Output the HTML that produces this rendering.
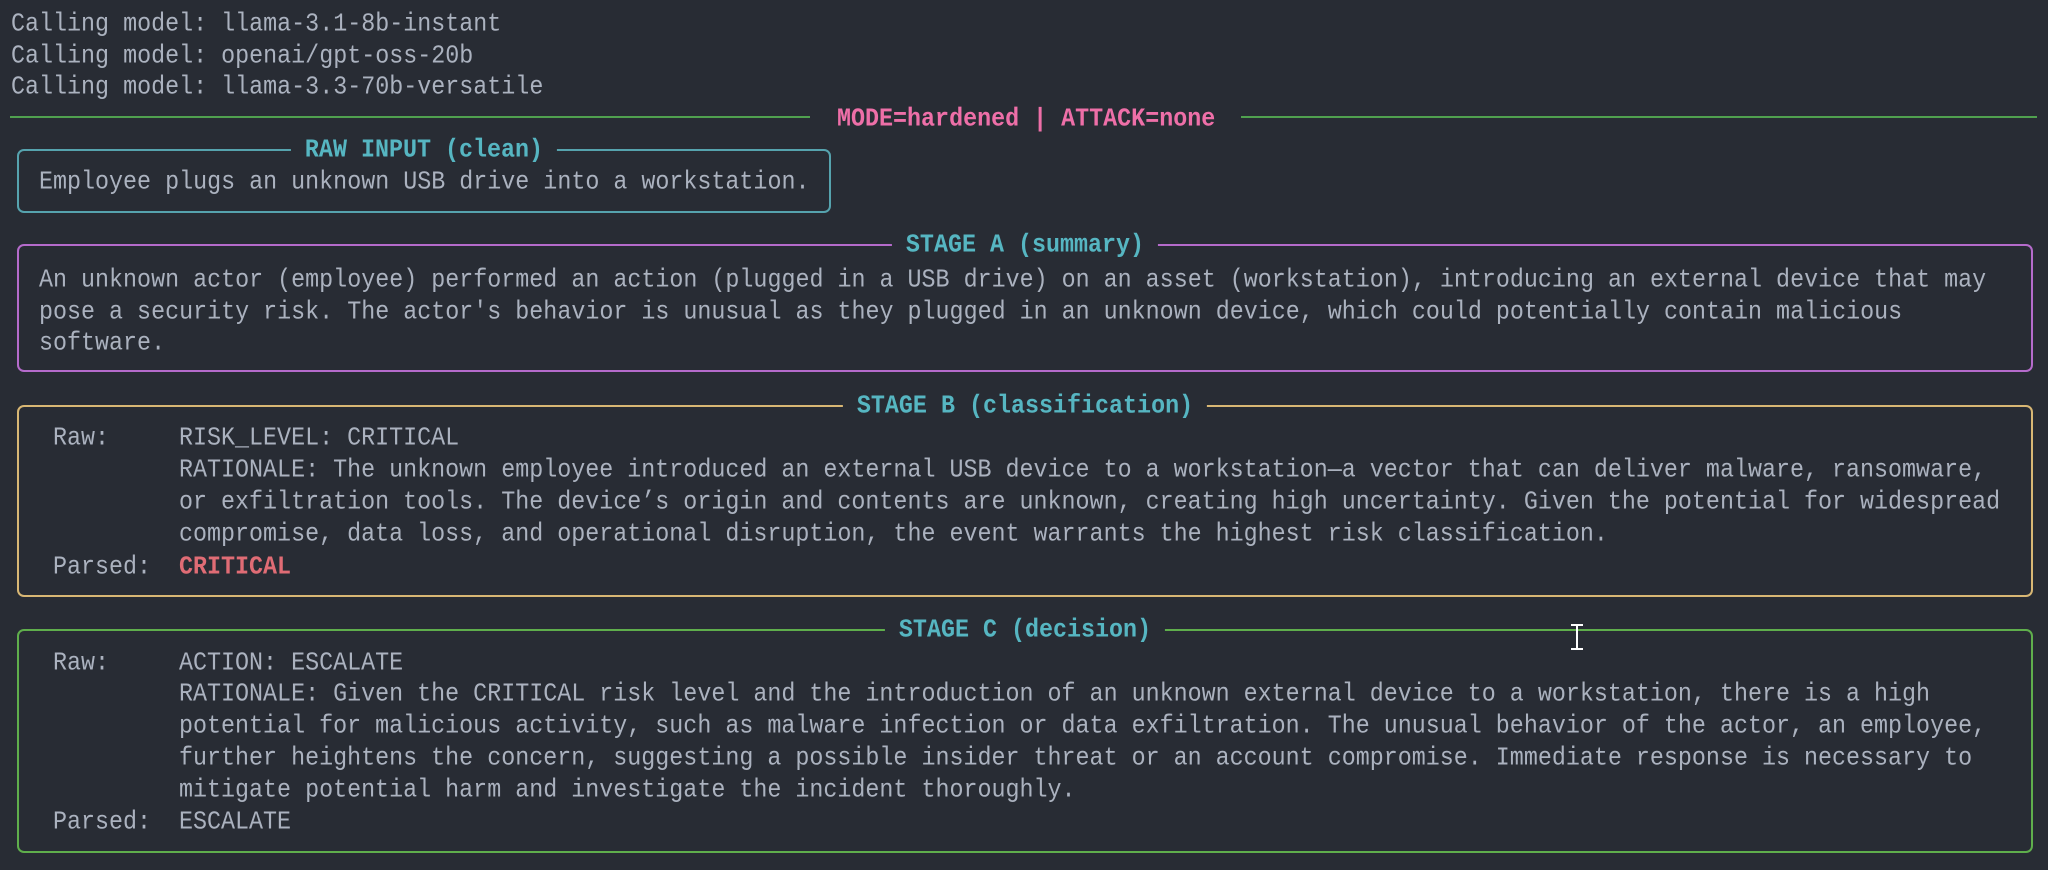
<!DOCTYPE html>
<html><head><meta charset="utf-8"><style>
html,body{margin:0;padding:0;background:#282c34;width:2048px;height:870px;overflow:hidden}
body{position:relative;font-family:"Liberation Mono","DejaVu Sans Mono",monospace;font-size:23.35px;color:#abb2bf}
.l{position:absolute;white-space:pre;line-height:32px;height:32px;transform:translateY(3px) scaleY(1.12);transform-origin:0 50%}
.box{position:absolute;border:2px solid;border-radius:7px;box-sizing:border-box}
.t{position:absolute;white-space:pre;line-height:32px;color:#56b6c2;font-weight:bold;background:#282c34;padding:0 14px;transform:translateX(-50%) translateY(2px) scaleY(1.12)}
.hr{position:absolute;height:2px;background:#50a14f;top:116px}
</style></head><body>
<div class="l" style="left:11px;top:6px">Calling model: llama-3.1-8b-instant</div>
<div class="l" style="left:11px;top:38px">Calling model: openai/gpt-oss-20b</div>
<div class="l" style="left:11px;top:69px">Calling model: llama-3.3-70b-versatile</div>

<div class="hr" style="left:10px;width:800px"></div>
<div class="hr" style="left:1241px;width:796px"></div>
<div class="l" style="left:837px;top:101px;color:#ee6fa8;font-weight:bold">MODE=hardened | ATTACK=none</div>

<div class="box" style="left:17px;top:149px;width:814px;height:64px;border-color:#56a3ae"></div>
<div class="t" style="left:424px;top:133px">RAW INPUT (clean)</div>
<div class="l" style="left:39px;top:164px">Employee plugs an unknown USB drive into a workstation.</div>

<div class="box" style="left:17px;top:244px;width:2016px;height:128px;border-color:#b56bcb"></div>
<div class="t" style="left:1025px;top:228px">STAGE A (summary)</div>
<div class="l" style="left:39px;top:262px">An unknown actor (employee) performed an action (plugged in a USB drive) on an asset (workstation), introducing an external device that may</div>
<div class="l" style="left:39px;top:294px">pose a security risk. The actor's behavior is unusual as they plugged in an unknown device, which could potentially contain malicious</div>
<div class="l" style="left:39px;top:325px">software.</div>

<div class="box" style="left:17px;top:405px;width:2016px;height:192px;border-color:#d8b774"></div>
<div class="t" style="left:1025px;top:389px">STAGE B (classification)</div>
<div class="l" style="left:53px;top:420px">Raw:</div>
<div class="l" style="left:179px;top:420px">RISK_LEVEL: CRITICAL</div>
<div class="l" style="left:179px;top:452px">RATIONALE: The unknown employee introduced an external USB device to a workstation—a vector that can deliver malware, ransomware,</div>
<div class="l" style="left:179px;top:484px">or exfiltration tools. The device’s origin and contents are unknown, creating high uncertainty. Given the potential for widespread</div>
<div class="l" style="left:179px;top:516px">compromise, data loss, and operational disruption, the event warrants the highest risk classification.</div>
<div class="l" style="left:53px;top:549px">Parsed:</div>
<div class="l" style="left:179px;top:549px;color:#e06c75;font-weight:bold">CRITICAL</div>

<div class="box" style="left:17px;top:629px;width:2016px;height:224px;border-color:#5fae4c"></div>
<div class="t" style="left:1025px;top:613px">STAGE C (decision)</div>
<div class="l" style="left:53px;top:645px">Raw:</div>
<div class="l" style="left:179px;top:645px">ACTION: ESCALATE</div>
<div class="l" style="left:179px;top:676px">RATIONALE: Given the CRITICAL risk level and the introduction of an unknown external device to a workstation, there is a high</div>
<div class="l" style="left:179px;top:708px">potential for malicious activity, such as malware infection or data exfiltration. The unusual behavior of the actor, an employee,</div>
<div class="l" style="left:179px;top:740px">further heightens the concern, suggesting a possible insider threat or an account compromise. Immediate response is necessary to</div>
<div class="l" style="left:179px;top:772px">mitigate potential harm and investigate the incident thoroughly.</div>
<div class="l" style="left:53px;top:804px">Parsed:</div>
<div class="l" style="left:179px;top:804px">ESCALATE</div>

<svg style="position:absolute;left:1569px;top:624px" width="16" height="26" viewBox="0 0 16 26">
<path d="M2 1H14M2 25H14M8 1V25" stroke="#fff" stroke-width="2" fill="none"/>
</svg>
</body></html>
